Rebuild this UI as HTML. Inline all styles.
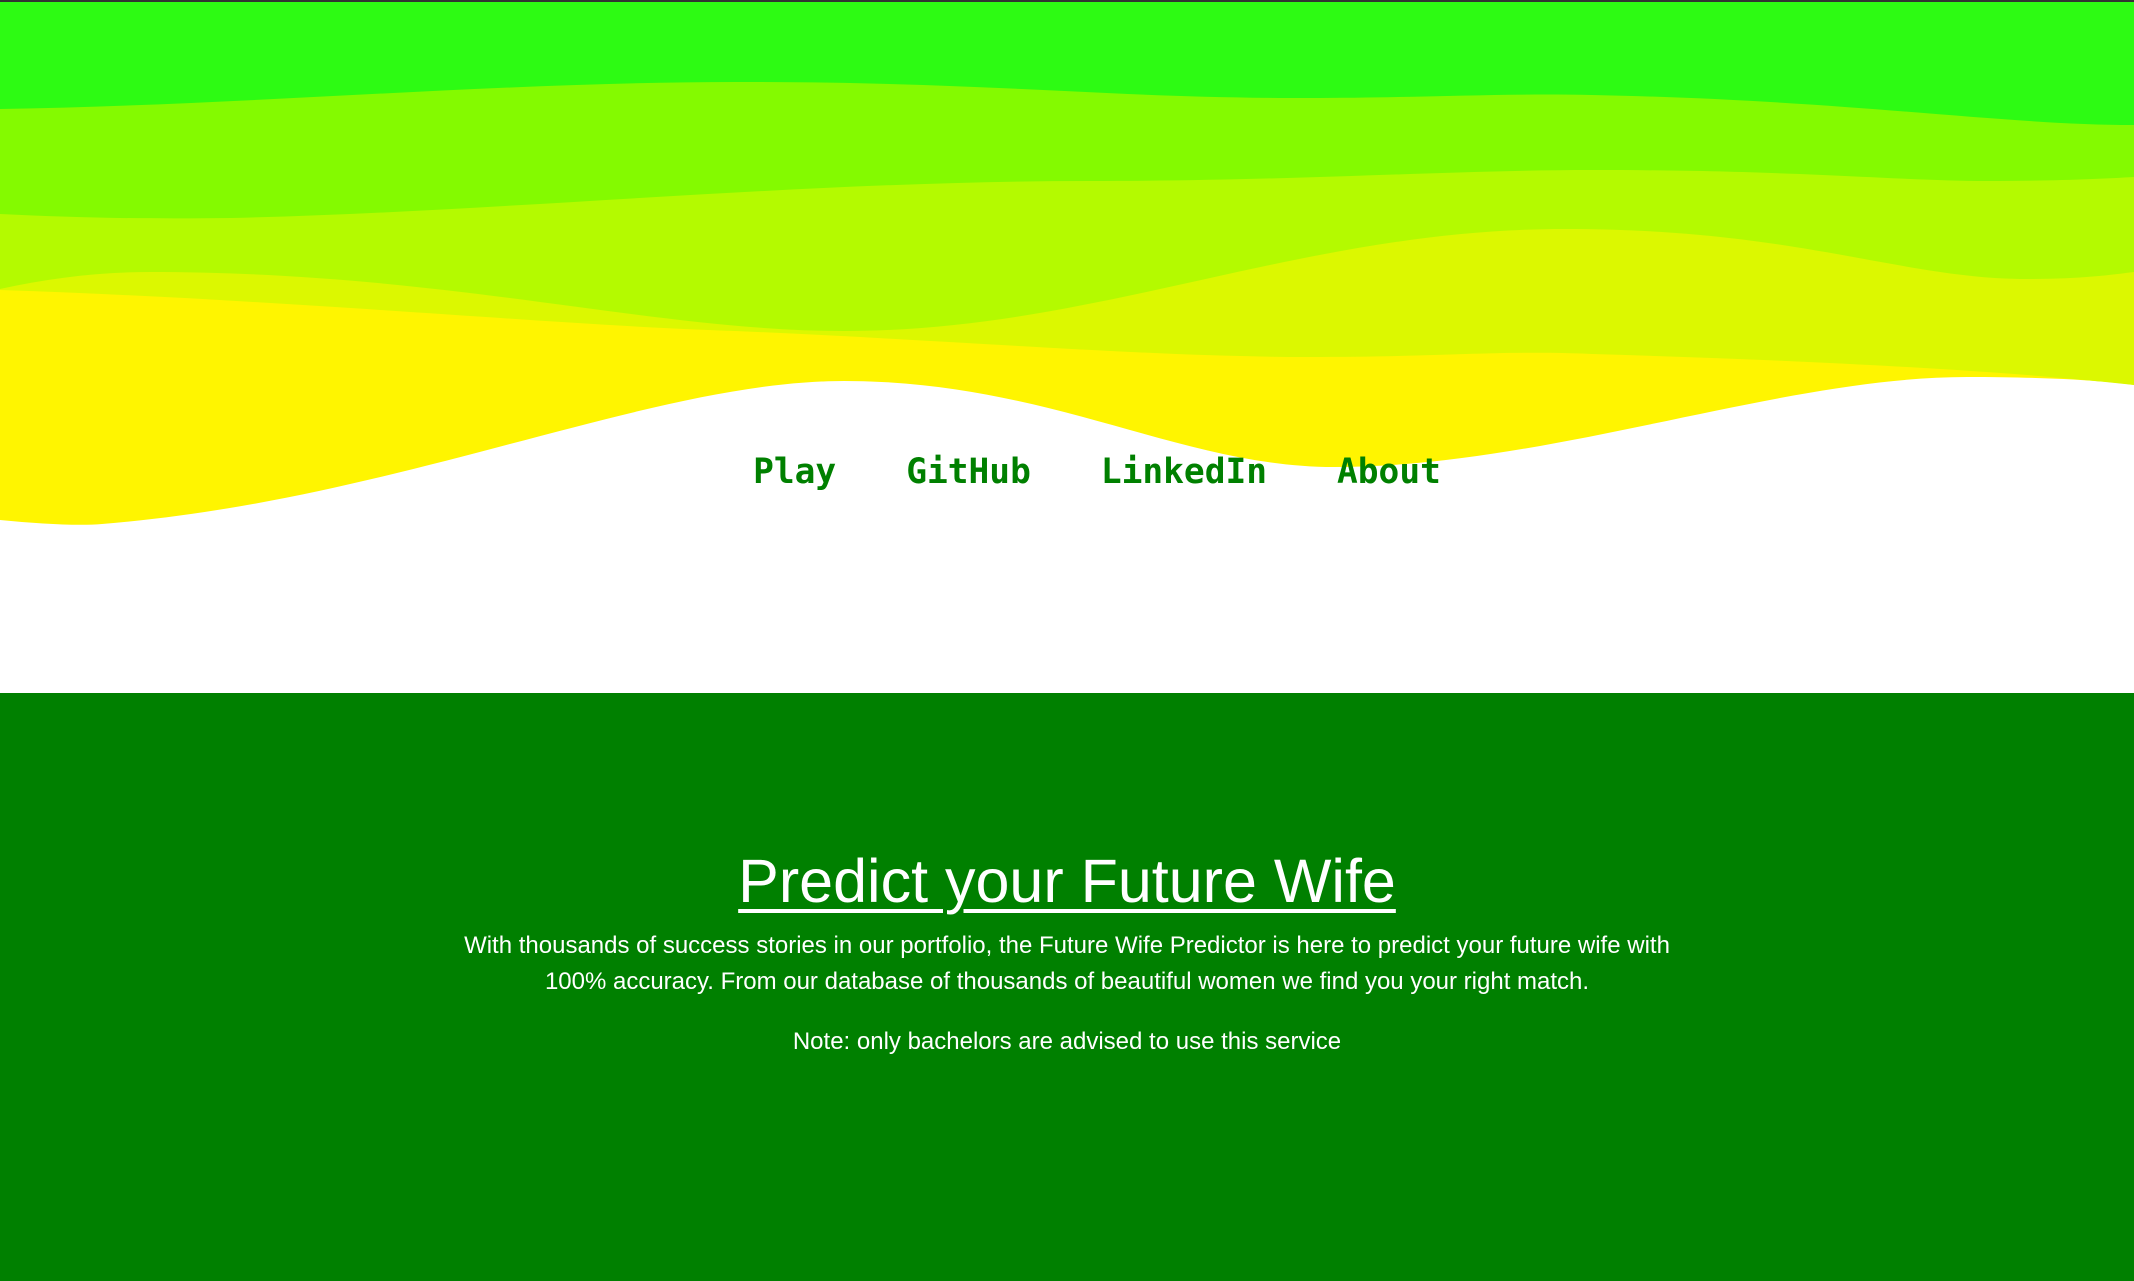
<!DOCTYPE html>
<html><head><meta charset="utf-8"><style>
html,body{margin:0;padding:0;width:2134px;height:1281px;overflow:hidden;background:#fff;font-family:"Liberation Sans",sans-serif;text-align:center}
#top{position:absolute;left:0;top:0;width:2134px;height:693px}
svg{position:absolute;left:0;top:0}
nav{position:absolute;left:30px;width:2134px;top:450px;text-align:center;white-space:nowrap;font-family:"DejaVu Sans Mono","Liberation Mono",monospace;font-weight:bold;font-size:34.5px;color:#008000;line-height:44px}
nav span{margin:0 35px}
#green{position:absolute;left:0;top:693px;width:2134px;height:588px;background:#008000}
h1{position:absolute;left:0;width:2134px;top:846px;margin:0;font-weight:normal;font-size:61px;line-height:70px;text-align:center;color:#fff;text-decoration:underline;text-decoration-thickness:4px;text-underline-offset:7px}
.p{position:absolute;left:0;width:2134px;font-size:24px;line-height:36px;white-space:nowrap;text-align:center;color:#fff}
</style></head><body>
<div id="top">
<svg width="2134" height="693" viewBox="0 0 2134 693">
<rect x="0" y="0" width="2134" height="693" fill="#fff"/>
<path d="M0,520 C40,524 80,526 102,524 C400,500 650,381 844,381 C1050,381 1180,467 1334,467 C1550,467 1780,377 1967,377 C2040,377 2100,380 2134,385 L2134,0 L0,0Z" fill="#fff500"/>
<path d="M0,290 C300,300 550,325 735,331 C950,340 1150,357 1307,357 C1450,357 1500,350 1592,354 C1800,360 2000,370 2134,385 L2134,0 L0,0Z" fill="#dcf800"/>
<path d="M0,289 C50,278 100,272 150,272 C450,272 650,331 844,331 C1100,331 1300,229 1565,229 C1800,229 1900,279 2028,279 C2080,279 2110,275 2134,272 L2134,0 L0,0Z" fill="#b4fa00"/>
<path d="M0,214 C80,218 150,219 231,218 C500,212 800,181 1089,181 C1300,181 1450,170 1592,170 C1800,170 1900,181 1987,181 C2050,181 2100,179 2134,177 L2134,0 L0,0Z" fill="#84fa00"/>
<path d="M0,109 C250,105 500,82 735,82 C1000,82 1100,98 1307,98 C1420,98 1500,93 1592,95 C1850,100 2000,125 2134,125 L2134,0 L0,0Z" fill="#2dfb13"/>
<rect x="0" y="0" width="2134" height="2" fill="#333"/>
</svg>
<nav><span>Play</span><span>GitHub</span><span>LinkedIn</span><span>About</span></nav>
</div>
<div id="green"></div>
<h1>Predict your Future Wife</h1>
<div class="p" style="top:928px">With thousands of success stories in our portfolio, the Future Wife Predictor is here to predict your future wife with<br>100% accuracy. From our database of thousands of beautiful women we find you your right match.</div>
<div class="p" style="top:1024px">Note: only bachelors are advised to use this service</div>
</body></html>
